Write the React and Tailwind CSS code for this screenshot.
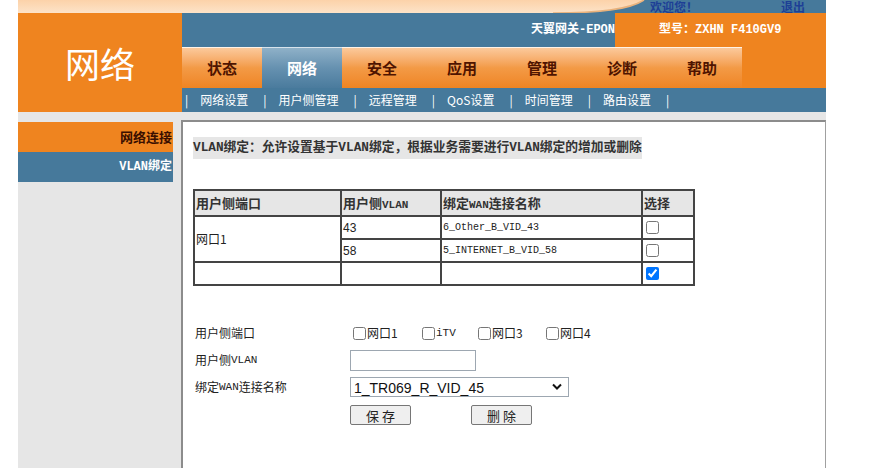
import React from "react";

const CJK = '"Noto Sans CJK SC", "Liberation Sans", sans-serif';
const MONO = '"Liberation Mono", "Noto Sans CJK SC", monospace';

function TopBand() {
  return (
    <div className="relative h-[13px] overflow-hidden bg-[#46799b]">
      <svg className="absolute inset-0" width="808" height="13" viewBox="0 0 808 13">
        <defs>
          <linearGradient id="pg" x1="0" y1="0" x2="0" y2="1">
            <stop offset="0" stopColor="#fcd2a9" />
            <stop offset="1" stopColor="#fde3c8" />
          </linearGradient>
        </defs>
        <path d="M0 0 H626 C612 9 585 13 535 13 H0 Z" fill="url(#pg)" />
        <path d="M626 0 C612 9 585 13 535 13" fill="none" stroke="#e9b27c" strokeWidth="1.5" />
      </svg>
      <div className="relative flex items-end h-[13px] text-[12px] leading-[14px] font-bold text-[#1d3f96]">
        <span className="ml-[632px] -mb-[1px]">欢迎您！</span>
        <span className="ml-[83px] -mb-[1px]">退出</span>
      </div>
    </div>
  );
}

const tabs = ["状态", "网络", "安全", "应用", "管理", "诊断", "帮助"];
const subs = ["网络设置", "用户侧管理", "远程管理", "QoS设置", "时间管理", "路由设置"];

export default function App() {
  return (
    <div className="w-[875px] h-[468px] overflow-hidden bg-white" style={{ fontFamily: CJK }}>
      <div className="ml-[18px] w-[808px] h-[468px] flex flex-col">
        <TopBand />
        <div className="flex h-[99px]">
          <div className="w-[164px] bg-[#ef841f] flex items-center justify-center text-white text-[35px] leading-none">
            网络
          </div>
          <div className="flex-1 flex flex-col">
            <div className="flex h-[34px]">
              <div className="w-[433px] bg-[#46799b] flex items-center justify-end text-white text-[12px] font-bold" style={{ fontFamily: MONO }}>
                天翼网关-EPON
              </div>
              <div className="flex-1 bg-[#ef841f] flex items-center pl-[44px] text-white text-[12px] font-bold" style={{ fontFamily: MONO }}>
                型号：ZXHN F410GV9
              </div>
            </div>
            <div className="flex h-[41px] bg-[#ef841f]">
              <div className="w-[560px] flex">
                {tabs.map((t, i) =>
                  i === 1 ? (
                    <div key={t} className="w-[80px] flex items-center justify-center text-[15px] font-bold text-white bg-linear-to-b from-[#8fb1c8] via-[#6691b0] to-[#4a7b9d] border-t border-[#d7e3ec]">
                      {t}
                    </div>
                  ) : (
                    <div key={t} className="w-[80px] flex items-center justify-center text-[15px] font-bold text-[#4f1400] bg-linear-to-b from-[#fbc99b] via-[#f39a45] to-[#ef8421] border-t border-[#fff3e6]">
                      {t}
                    </div>
                  )
                )}
              </div>
            </div>
            <div className="h-[24px] bg-[#46799b] flex items-center text-white text-[12px]">
              <span className="ml-[3px]">|</span>
              {subs.map((s) => (
                <React.Fragment key={s}>
                  <span className="ml-[12px]">{s}</span>
                  <span className="ml-[15px]">|</span>
                </React.Fragment>
              ))}
            </div>
          </div>
        </div>
        <div className="flex-1 flex bg-[#e6e6e6]">
          <div className="w-[155px] mt-[10px] flex flex-col">
            <div className="h-[30px] bg-[#ef841f] flex items-center justify-end pr-[1px] text-[13px] font-bold text-[#3a0f00]">
              网络连接
            </div>
            <div className="h-[30px] bg-[#46799b] flex items-center justify-end pr-[1px] text-[12px] font-bold text-white" style={{ fontFamily: MONO }}>
              VLAN绑定
            </div>
          </div>
          <div className="ml-[8px] mt-[8px] flex-1 bg-white border-l-2 border-t-2 border-[#8c8c8c] border-r border-r-[#a0a0a0] pl-[10px]">
            <div className="mt-[15px] inline-block h-[22px] leading-[22px] bg-[#e6e6e6] text-[12.75px] font-bold text-[#333]" style={{ fontFamily: MONO }}>
              VLAN绑定：允许设置基于VLAN绑定，根据业务需要进行VLAN绑定的增加或删除
            </div>
            <table className="mt-[30px] border-collapse border-2 border-[#444] text-[12px] text-[#222]">
              <thead>
                <tr className="h-[26px] bg-[#e6e6e6] text-[13px] font-bold text-[#333] text-left">
                  <th className="w-[147px] border-2 border-[#444] px-[1px] font-bold">用户侧端口</th>
                  <th className="w-[100px] border-2 border-[#444] px-[1px] font-bold"><span>用户侧</span><span className="text-[11px]" style={{ fontFamily: MONO }}>VLAN</span></th>
                  <th className="w-[201px] border-2 border-[#444] px-[1px] font-bold">绑定<span className="text-[11px]" style={{ fontFamily: MONO }}>WAN</span>连接名称</th>
                  <th className="w-[52px] border-2 border-[#444] px-[1px] font-bold">选择</th>
                </tr>
              </thead>
              <tbody>
                <tr className="h-[23px]">
                  <td rowSpan={2} className="border-2 border-[#444] px-[1px]">网口1</td>
                  <td className="border-2 border-[#444] px-[1px]" style={{ fontFamily: '"Liberation Sans", sans-serif' }}>43</td>
                  <td className="border-2 border-[#444] px-[1px] text-[10px]" style={{ fontFamily: MONO }}>6_Other_B_VID_43</td>
                  <td className="border-2 border-[#444] px-[1px]"><input type="checkbox" className="block w-[13px] h-[13px] ml-[2px]" /></td>
                </tr>
                <tr className="h-[23px]">
                  <td className="border-2 border-[#444] px-[1px]" style={{ fontFamily: '"Liberation Sans", sans-serif' }}>58</td>
                  <td className="border-2 border-[#444] px-[1px] text-[10px]" style={{ fontFamily: MONO }}>5_INTERNET_B_VID_58</td>
                  <td className="border-2 border-[#444] px-[1px]"><input type="checkbox" className="block w-[13px] h-[13px] ml-[2px]" /></td>
                </tr>
                <tr className="h-[23px]">
                  <td className="border-2 border-[#444]"></td>
                  <td className="border-2 border-[#444]"></td>
                  <td className="border-2 border-[#444]"></td>
                  <td className="border-2 border-[#444] px-[1px]"><input type="checkbox" defaultChecked className="block w-[13px] h-[13px] ml-[2px]" /></td>
                </tr>
              </tbody>
            </table>
            <div className="mt-[36px] ml-[2px] grid grid-cols-[155px_1fr] text-[12px] text-[#222]">
              <div className="h-[22px] flex items-center">用户侧端口</div>
              <div className="h-[22px] flex items-center">
                {[
                  ["网口1", "w-[69px]"],
                  ["iTV", "w-[56px]"],
                  ["网口3", "w-[68px]"],
                  ["网口4", "w-[60px]"],
                ].map(([l, w]) => (
                  <label key={l} className={`flex items-center ${w}`}>
                    <input type="checkbox" className="w-[13px] h-[13px] ml-[3px] mr-[1px]" />
                    <span style={l === "iTV" ? { fontFamily: MONO, fontSize: "11px" } : undefined}>{l}</span>
                  </label>
                ))}
              </div>
              <div className="mt-[5px] h-[22px] flex items-center">用户侧<span style={{ fontFamily: MONO, fontSize: "11px" }}>VLAN</span></div>
              <div className="mt-[5px] h-[22px] flex items-center">
                <input type="text" className="w-[126px] h-[21px] border border-[#9da7b1] bg-white" />
              </div>
              <div className="mt-[6px] h-[20px] flex items-center">绑定<span style={{ fontFamily: MONO, fontSize: "11px" }}>WAN</span>连接名称</div>
              <div className="mt-[6px] h-[20px] flex items-center">
                <div className="relative w-[219px] h-[20px]">
                  <select className="appearance-none w-[219px] h-[20px] border border-[#9da7b1] bg-white pl-[3px] text-[14px] text-[#111]" style={{ fontFamily: '"Liberation Sans", sans-serif' }}>
                    <option>1_TR069_R_VID_45</option>
                  </select>
                  <svg className="absolute right-[7px] top-[6px] pointer-events-none" width="10" height="7" viewBox="0 0 10 7">
                    <path d="M1 1.5 L5 5.5 L9 1.5" fill="none" stroke="#111" strokeWidth="2" />
                  </svg>
                </div>
              </div>
              <div className="mt-[8px]"></div>
              <div className="mt-[8px] flex items-center h-[20px]">
                <button className="w-[61px] h-[20px] bg-[#efefef] border border-[#767676] rounded-[2px] text-[13px] text-[#222] leading-none">保 存</button>
                <button className="ml-[60px] w-[61px] h-[20px] bg-[#efefef] border border-[#767676] rounded-[2px] text-[13px] text-[#222] leading-none">删 除</button>
              </div>
            </div>
          </div>
        </div>
      </div>
    </div>
  );
}
